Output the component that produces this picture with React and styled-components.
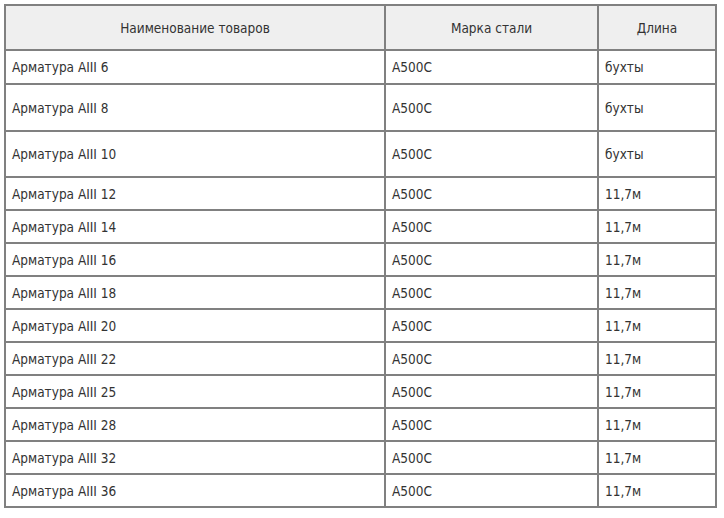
import React from 'react';
import styled, { createGlobalStyle } from 'styled-components';

const GlobalStyle = createGlobalStyle`
  html, body {
    margin: 0;
    padding: 0;
    background: #fff;
  }
  body {
    font-family: 'DejaVu Sans Condensed', 'DejaVu Sans', sans-serif;
  }
`;

// Rows of the price list
const rows = [
  { name: 'Арматура AIII 6', grade: 'А500С', length: 'бухты', height: 32 },
  { name: 'Арматура AIII 8', grade: 'А500С', length: 'бухты', height: 45 },
  { name: 'Арматура AIII 10', grade: 'А500С', length: 'бухты', height: 44 },
  { name: 'Арматура AIII 12', grade: 'А500С', length: '11,7м' },
  { name: 'Арматура AIII 14', grade: 'А500С', length: '11,7м' },
  { name: 'Арматура AIII 16', grade: 'А500С', length: '11,7м' },
  { name: 'Арматура AIII 18', grade: 'А500С', length: '11,7м' },
  { name: 'Арматура AIII 20', grade: 'А500С', length: '11,7м' },
  { name: 'Арматура AIII 22', grade: 'А500С', length: '11,7м' },
  { name: 'Арматура AIII 25', grade: 'А500С', length: '11,7м' },
  { name: 'Арматура AIII 28', grade: 'А500С', length: '11,7м' },
  { name: 'Арматура AIII 32', grade: 'А500С', length: '11,7м' },
  { name: 'Арматура AIII 36', grade: 'А500С', length: '11,7м' },
];

const App = () => {
  return (
    <Wrapper>
      <GlobalStyle />
      <Table>
        <colgroup>
          <col style={{ width: 380 }} />
          <col style={{ width: 213 }} />
          <col style={{ width: 118 }} />
        </colgroup>
        <thead>
          <tr>
            <HeadCell>Наименование товаров</HeadCell>
            <HeadCell>Марка стали</HeadCell>
            <HeadCell>Длина</HeadCell>
          </tr>
        </thead>
        <tbody>
          {rows.map((item) => (
            <Row key={item.name} $height={item.height}>
              <Cell>{item.name}</Cell>
              <Cell>{item.grade}</Cell>
              <Cell>{item.length}</Cell>
            </Row>
          ))}
        </tbody>
      </Table>
    </Wrapper>
  );
};

const Wrapper = styled.div`
  padding: 4px 0 0 4px;
`;

const Table = styled.table`
  border-collapse: collapse;
  table-layout: fixed;
  width: 713px;
  border: 2px solid #808080;
  font-size: 13.5px;
  color: #333;
`;

const HeadCell = styled.th`
  height: 43px;
  padding: 0 6px;
  background: #efefef;
  border: 2px solid #808080;
  font-weight: normal;
  text-align: center;
  vertical-align: middle;
`;

const Row = styled.tr`
  height: ${(p) => (p.$height || 31) + 2}px;
`;

const Cell = styled.td`
  padding: 0 6px;
  border: 2px solid #808080;
  text-align: left;
  vertical-align: middle;
  white-space: nowrap;
`;

export default App;
